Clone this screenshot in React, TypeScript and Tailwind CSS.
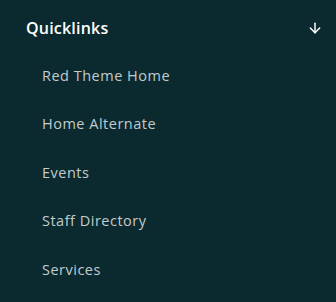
import { ArrowDown } from "lucide-react";

const links = ["Red Theme Home", "Home Alternate", "Events", "Staff Directory", "Services"];

export default function App() {
  return (
    <div className="h-[302px] w-[336px] bg-[#0a2a30] font-['Open_Sans',sans-serif]">
      <div className="flex h-[50px] items-center justify-between pl-[26px] pr-[13px] pt-[6px]">
        <span className="text-[16px] font-semibold tracking-[0.2px] text-white">Quicklinks</span>
        <ArrowDown className="h-[16px] w-[16px] text-white" strokeWidth={2.2} />
      </div>
      <ul className="pl-[42px] pt-[1.5px]">
        {links.map((l) => (
          <li
            key={l}
            className="flex h-[48.5px] items-center text-[14.5px] font-medium tracking-[0.5px] text-[#c3cbcd]"
          >
            {l}
          </li>
        ))}
      </ul>
    </div>
  );
}
